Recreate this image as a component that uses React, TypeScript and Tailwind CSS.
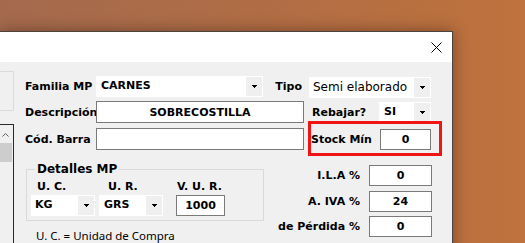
import React from "react";

const lbl = "font-['DejaVu_Sans',sans-serif] font-bold text-[11px] text-black leading-[13px] whitespace-nowrap";

function Arrow() {
  return (
    <svg width="5" height="3" viewBox="0 0 5 3" className="block">
      <path d="M0 0h5v1H0zM1 1h3v1H1zM2 2h1v1H2z" fill="#000" />
    </svg>
  );
}

function Combo({ value, width, bold = true, pl = 4 }: { value: string; width: string; bold?: boolean; pl?: number }) {
  return (
    <div className={`flex h-[21px] bg-white p-px ${width}`}>
      <div
        className={
          bold
            ? "flex-1 flex items-center font-['DejaVu_Sans',sans-serif] font-bold text-[11px] text-black"
            : "flex-1 flex items-center font-['DejaVu_Sans',sans-serif] text-[12px] text-black"
        }
        style={{ paddingLeft: pl - 1 }}
      >
        {value}
      </div>
      <div className="w-[16px] bg-[#efefef] flex items-center justify-center">
        <Arrow />
      </div>
    </div>
  );
}

function Field({ value, width, h = "h-[22px]" }: { value: string; width: string; h?: string }) {
  return (
    <div className={`${h} ${width} bg-white border border-[#7a7a7a] flex items-center justify-center ${lbl}`}>
      {value}
    </div>
  );
}

export default function App() {
  return (
    <div className="relative w-[525px] h-[243px] overflow-hidden bg-gradient-to-r from-[#a46a4d] via-[#b06d45] to-[#bf723c]">
      {/* window */}
      <div className="absolute left-0 top-[31px] w-[453px] h-[240px] border-t border-r border-[#4e433c] bg-[#f0f0f0] shadow-[0_0_14px_rgba(40,20,10,0.45)]">
        <div className="h-[30px] bg-white flex items-center justify-end pr-[10px]">
          <svg width="11" height="11" viewBox="0 0 11 11">
            <path d="M0.5 0.5L10.5 10.5M10.5 0.5L0.5 10.5" stroke="#000" strokeWidth="1" />
          </svg>
        </div>

        <div className="flex">
          {/* left strip */}
          <div className="w-[14px] shrink-0">
            <div className="mt-[9px] h-[40px] border-y border-r border-[#dadada]" />
            <div className="mt-[13px] h-[130px] border-t border-r border-[#2a2a2a] pt-[8px]">
              <div className="flex justify-center pr-[3px]">
                <svg width="7" height="4" viewBox="0 0 7 4">
                  <path d="M0.5 3.5L3.5 0.5L6.5 3.5" stroke="#606060" fill="none" strokeWidth="1" />
                </svg>
              </div>
              <div className="mt-[6px] w-[12px] h-[19px] bg-[#cdcdcd]" />
            </div>
          </div>

          {/* form */}
          <div className="ml-[11px] pt-[14px]">
            <div className="flex items-center h-[21px]">
              <div className={`${lbl} w-[71px]`}>Familia MP</div>
              <Combo value="CARNES" width="w-[167px]" pl={5} />
              <div className={`${lbl} w-[46px] text-right pr-[7px]`}>Tipo</div>
              <div className="mt-[1px]">
                <Combo value="Semi elaborado" width="w-[122px]" bold={false} />
              </div>
            </div>

            <div className="flex items-center mt-[4px]">
              <div className={`${lbl} w-[71px]`}>Descripción</div>
              <Field value="SOBRECOSTILLA" width="w-[208px]" />
              <div className={`${lbl} w-[75px] pl-[8px]`}>Rebajar?</div>
              <Combo value="SI" width="w-[52px]" pl={5} />
            </div>

            <div className="flex items-center mt-[5px]">
              <div className={`${lbl} w-[71px]`}>Cód. Barra</div>
              <Field value="" width="w-[208px]" />
              <div className={`${lbl} w-[76px] pl-[7px]`}>Stock Mín</div>
              <Field value="0" width="w-[51px]" h="h-[21px]" />
            </div>

            <div className="flex mt-[15px]">
              <div className="w-[238px] ml-px">
                <div className="relative mt-[4px] h-[52px] border border-[#d9d9d9] pt-[10px] pl-[4px]">
                  <div className="absolute left-[8px] -top-[8px] px-[2px] bg-[#f0f0f0] font-['DejaVu_Sans',sans-serif] font-bold text-[12px] leading-[15px] text-black">
                    Detalles MP
                  </div>
                  <div className="flex h-[13px]">
                    <div className={`${lbl} w-[68px] pl-[6px]`}>U. C.</div>
                    <div className={`${lbl} w-[77px] pl-[9px]`}>U. R.</div>
                    <div className={`${lbl} pl-px`}>V. U. R.</div>
                  </div>
                  <div className="flex mt-[2px] items-center">
                    <Combo value="KG" width="w-[64px]" />
                    <div className="ml-[4px]">
                      <Combo value="GRS" width="w-[64px]" pl={5} />
                    </div>
                    <div className="ml-[13px]">
                      <Field value="1000" width="w-[49px]" h="h-[21px]" />
                    </div>
                  </div>
                </div>
                <div className="mt-[8px] ml-[10px] font-['Noto_Sans',sans-serif] text-[11.5px] leading-[14px] text-black whitespace-nowrap">
                  U. C. = Unidad de Compra
                </div>
              </div>

              <div className="flex flex-col">
                <div className="flex items-center h-[21px]">
                  <div className={`${lbl} w-[96px] text-right`}>I.L.A %</div>
                  <div className="ml-[9px]"><Field value="0" width="w-[63px]" h="h-[21px]" /></div>
                </div>
                <div className="flex items-center h-[21px] mt-[5px]">
                  <div className={`${lbl} w-[96px] text-right`}>A. IVA %</div>
                  <div className="ml-[9px]"><Field value="24" width="w-[63px]" h="h-[21px]" /></div>
                </div>
                <div className="flex items-center h-[21px] mt-[4px]">
                  <div className={`${lbl} w-[96px] text-right`}>de Pérdida %</div>
                  <div className="ml-[9px]"><Field value="0" width="w-[63px]" h="h-[21px]" /></div>
                </div>
              </div>
            </div>
          </div>
        </div>
      </div>

      {/* red highlight annotation */}
      <div className="absolute left-[308px] top-[121px] w-[134px] h-[35px] border-[3px] border-[#f01414]" />
    </div>
  );
}
